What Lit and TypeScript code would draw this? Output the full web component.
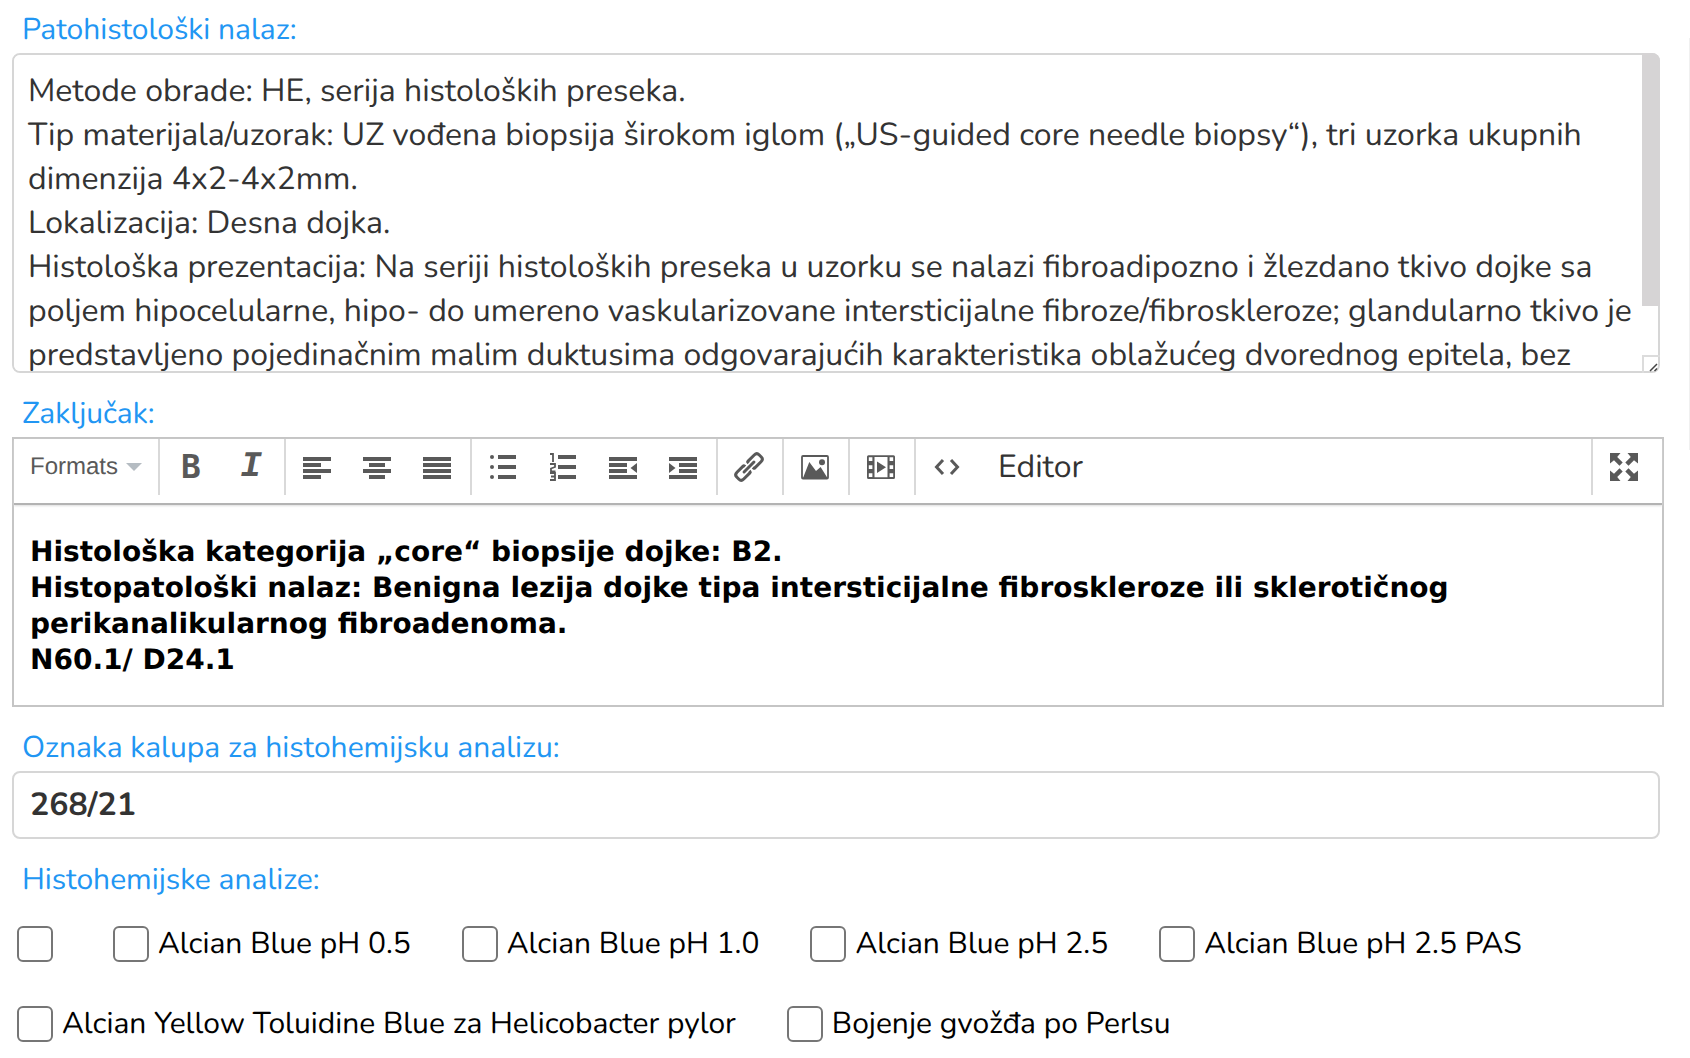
import { LitElement, html, svg, css, TemplateResult } from "lit";
import { customElement, state } from "lit/decorators.js";

const FINDING = [
  "Metode obrade: HE, serija histoloških preseka.",
  "Tip materijala/uzorak: UZ vođena biopsija širokom iglom („US-guided core needle biopsy“), tri uzorka ukupnih dimenzija 4x2-4x2mm.",
  "Lokalizacija: Desna dojka.",
  "Histološka prezentacija: Na seriji histoloških preseka u uzorku se nalazi fibroadipozno i žlezdano tkivo dojke sa poljem hipocelularne, hipo- do umereno vaskularizovane intersticijalne fibroze/fibroskleroze; glandularno tkivo je predstavljeno pojedinačnim malim duktusima odgovarajućih karakteristika oblažućeg dvorednog epitela, bez",
  "",
].join("\n");

const CONCLUSION = [
  "Histološka kategorija „core“ biopsije dojke: B2.",
  "Histopatološki nalaz: Benigna lezija dojke tipa intersticijalne fibroskleroze ili sklerotičnog perikanalikularnog fibroadenoma.",
  "N60.1/ D24.1",
];

const STAINS = [
  "",
  "Alcian Blue pH 0.5",
  "Alcian Blue pH 1.0",
  "Alcian Blue pH 2.5",
  "Alcian Blue pH 2.5 PAS",
  "Alcian Yellow Toluidine Blue za Helicobacter pylor",
  "Bojenje gvožđa po Perlsu",
];

const bar = (x: number, y: number, w: number) =>
  svg`<rect x=${x} y=${y} width=${w} height="4"></rect>`;

const icon = (body: unknown) =>
  html`<svg class="icon" viewBox="0 0 28 28" aria-hidden="true">${body}</svg>`;

const ICONS: Record<string, TemplateResult> = {
  left: icon([bar(0, 4, 28), bar(0, 10, 18), bar(0, 16, 28), bar(0, 22, 18)]),
  center: icon([bar(0, 4, 28), bar(6, 10, 16), bar(0, 16, 28), bar(6, 22, 16)]),
  justify: icon([bar(0, 4, 28), bar(0, 10, 28), bar(0, 16, 28), bar(0, 22, 28)]),
  bullets: icon([
    bar(9, 2, 18), bar(9, 12, 18), bar(9, 22, 18),
    svg`<circle cx="3" cy="4" r="2"></circle><circle cx="3" cy="14" r="2"></circle><circle cx="3" cy="24" r="2"></circle>`,
  ]),
  numbers: icon([
    bar(9, 2, 18), bar(9, 12, 18), bar(9, 22, 18),
    svg`<path class="line" stroke-width="1.8" d="M1 1H4V9M1 11H6V14L2 15.500V18.500H6.500M1 20H6V27H1M2 23.500H6"></path>`,
  ]),
  outdent: icon([bar(0, 4, 28), bar(0, 10, 18), bar(0, 16, 18), bar(0, 22, 28), svg`<path d="M28 10V20L21.500 15Z"></path>`]),
  indent: icon([bar(0, 4, 28), bar(10, 10, 18), bar(10, 16, 18), bar(0, 22, 28), svg`<path d="M0 10V20L6.500 15Z"></path>`]),
  link: icon(svg`<g class="line" transform="rotate(-45 14 14)" stroke-width="3">
      <path d="M11.500 11V10.200Q11.500 9.200 10.500 9.200H1.800Q-1.800 9.200 -1.800 12.400V15.600Q-1.800 18.800 1.800 18.800H10.500Q11.500 18.800 11.500 17.800V17"></path>
      <path d="M16.500 11V10.200Q16.500 9.200 17.500 9.200H26.200Q29.800 9.200 29.800 12.400V15.600Q29.800 18.800 26.200 18.800H17.500Q16.500 18.800 16.500 17.800V17"></path>
      <path d="M7 14H21" stroke-linecap="round"></path></g>`),
  image: icon(svg`<rect class="line" x="1" y="3" width="26" height="22.500" rx="1" stroke-width="1.800"></rect>
    <circle cx="21" cy="9.300" r="3"></circle><path d="M2 25L8.300 9L15 18L19.600 14L26.500 25Z"></path>`),
  media: icon(svg`<path fill-rule="evenodd" d="M1.500 2.200H26.500Q28 2.200 28 3.700V24.500Q28 26 26.500 26H1.500Q0 26 0 24.500V3.700Q0 2.200 1.500 2.200ZM7.500 4V24.200H20.500V4ZM1.800 4.300V8H5.400V4.300ZM1.800 12.200V16H5.400V12.200ZM1.800 20.300V24H5.400V20.300ZM22.600 4.300V8H26.200V4.300ZM22.600 12.200V16H26.200V12.200ZM22.600 20.300V24H26.200V20.300Z"></path>
    <path d="M10 8.500L19 14.200L10 20Z"></path>`),
  code: icon(svg`<path class="line" stroke-width="3" d="M10 7L3.500 14L10 21M18 7L24.500 14L18 21"></path>`),
  fullscreen: icon([0, 90, 180, 270].map(
    (a) => svg`<path transform="rotate(${a} 14 14)" d="M0 0H10.500L7.200 4L12.700 9.500L9.500 12.700L4 7.200L0 10.500Z"></path>`)),
};

const GROUPS: [string, string][][] = [
  [["left", "Align left"], ["center", "Align center"], ["justify", "Justify"]],
  [["bullets", "Bullet list"], ["numbers", "Numbered list"], ["outdent", "Decrease indent"], ["indent", "Increase indent"]],
  [["link", "Insert link"]],
  [["image", "Insert image"]],
  [["media", "Insert video"]],
];

@customElement("app-root")
export class AppRoot extends LitElement {
  @state() private fullscreen = false;

  static styles = css`
    :host {
      display: block;
      position: relative;
      font-family: Nunito, Lato, "Open Sans", sans-serif;
      text-rendering: geometricPrecision;
      color: #333;
      background: #fff;
    }
    * { box-sizing: border-box; }
    .form { padding: 8px 26px 0 12px; }
    .page-edge {
      position: absolute;
      top: 38px;
      right: 0;
      width: 1px;
      height: 412px;
      background: #f0f0f0;
    }
    .label {
      display: block;
      padding: 0 10px;
      font-size: 30px;
      line-height: 44px;
      color: #2196f3;
    }
    .field { position: relative; margin: 1px 4px 19px 0; }
    .box {
      display: block;
      width: 100%;
      margin: 0;
      border: 2px solid #d6d6d6;
      border-radius: 8px;
      background: #fff;
      color: #333;
      font-family: inherit;
      font-size: 32px;
      text-rendering: inherit;
      outline: none;
    }
    .area {
      height: 320px;
      padding: 15px 24px 14px 14px;
      line-height: 44px;
      resize: none;
      overflow-y: scroll;
      scrollbar-width: none;
    }
    .scroll {
      position: absolute;
      inset: 0 0 0 auto;
      display: flex;
      flex-direction: column;
      justify-content: space-between;
      width: 18px;
      border-radius: 0 8px 8px 0;
      overflow: hidden;
      pointer-events: none;
    }
    .thumb { height: 79%; background: #d6d4d5; }
    .grip {
      width: 18px;
      height: 18px;
      fill: none;
      stroke: #444;
      stroke-width: 1.5;
      border: solid #dcdcdc;
      border-width: 2px 0 0 2px;
    }
    .code {
      height: 68px;
      padding: 0 16px;
      font-weight: 700;
    }
    .editor { margin: 1px 0 19px; border: 2px solid #c5c5c5; }
    .toolbar {
      display: flex;
      height: 66px;
      padding-bottom: 8px;
      border-bottom: 2px solid #b3b3b3;
      box-shadow: 0 1px 2px #ddd;
    }
    .group { display: flex; padding: 0 3px 0 1px; border-left: 2px solid #d9d9d9; }
    .group.first { border-left: 0; padding: 0; }
    .group.last { margin-left: auto; padding-right: 8px; }
    .content.tall { min-height: 600px; }
    button {
      display: flex;
      align-items: center;
      justify-content: center;
      min-width: 60px;
      margin: 0;
      padding: 0;
      border: 0;
      background: none;
      color: #595959;
      font-family: inherit;
      text-rendering: inherit;
    }
    .formats {
      gap: 8px;
      padding: 0 16px;
      font-family: "Liberation Sans", Arial, sans-serif;
      font-size: 24px;
    }
    .caret { width: 16px; height: 8px; fill: #b5bcc2; }
    .bold { font: 700 33px/36px "DejaVu Sans Mono", monospace; }
    .italic { font: italic 700 36px/36px "Liberation Mono", monospace; }
    .named { padding: 0 21px; font-size: 32px; color: #333; }
    .icon { width: 28px; height: 28px; fill: currentColor; overflow: visible; }
    .line { fill: none; stroke: currentColor; }
    .content {
      padding: 29px 16px 27px;
      color: #000;
      font-family: Verdana, "DejaVu Sans", sans-serif;
      font-size: 28px;
      font-weight: 700;
      line-height: 36px;
      outline: none;
    }
    .content p { margin: 0; }
    fieldset { margin: 0; padding: 0; border: 0; min-width: 0; }
    .checks { display: flex; flex-wrap: wrap; column-gap: 51px; padding: 2px 0 0 5px; }
    .check {
      display: flex;
      align-items: center;
      gap: 9px;
      height: 80px;
      color: #000;
      font-size: 30px;
      line-height: 44px;
    }
    .check input {
      appearance: none;
      flex: none;
      width: 36px;
      height: 36px;
      margin: 0;
      border: 2px solid #767676;
      border-radius: 6px;
      background: #fff;
    }
    .check input:checked { background: #2196f3; }
  `;

  render() {
    return html`
      <form class="form" @submit=${(e: Event) => e.preventDefault()}>
        <label class="label" for="finding">Patohistološki nalaz:</label>
        <div class="field">
          <textarea class="box area" id="finding" spellcheck="false" .value=${FINDING}></textarea>
          <div class="scroll" aria-hidden="true">
            <div class="thumb"></div>
            <svg class="grip" viewBox="0 0 16 16"><path d="M6 14L13 7M10.500 14L13 11.500"></path></svg>
          </div>
        </div>

        <span class="label" id="conclusion">Zaključak:</span>
        <div class="editor">
          <div class="toolbar" role="toolbar">
            <div class="group first">
              <button type="button" class="formats">Formats
                <svg class="caret" viewBox="0 0 16 8" aria-hidden="true"><path d="M0 0H16L8 8Z"></path></svg>
              </button>
            </div>
            <div class="group">
              <button type="button" class="bold" aria-label="Bold">B</button>
              <button type="button" class="italic" aria-label="Italic">I</button>
            </div>
            ${GROUPS.map((g) => html`<div class="group">
              ${g.map(([name, label]) => html`<button type="button" aria-label=${label}>${ICONS[name]}</button>`)}
            </div>`)}
            <div class="group">
              <button type="button" aria-label="Source code">${ICONS.code}</button>
              <button type="button" class="named">Editor</button>
            </div>
            <div class="group last">
              <button type="button" aria-label="Fullscreen"
                @click=${() => (this.fullscreen = !this.fullscreen)}>${ICONS.fullscreen}</button>
            </div>
          </div>
          <div class="content ${this.fullscreen ? "tall" : ""}" role="textbox" aria-multiline="true"
            aria-labelledby="conclusion" contenteditable="true" spellcheck="false">${CONCLUSION.map((t) => html`<p>${t}</p>`)}</div>
        </div>

        <label class="label" for="mold">Oznaka kalupa za histohemijsku analizu:</label>
        <div class="field">
          <input class="box code" id="mold" type="text" value="268/21" />
        </div>

        <fieldset>
          <legend class="label">Histohemijske analize:</legend>
          <div class="checks">
            ${STAINS.map((s) => html`<label class="check"><input type="checkbox" name="stain" /><span>${s}</span></label>`)}
          </div>
        </fieldset>
      </form>
      <div class="page-edge"></div>
    `;
  }
}
